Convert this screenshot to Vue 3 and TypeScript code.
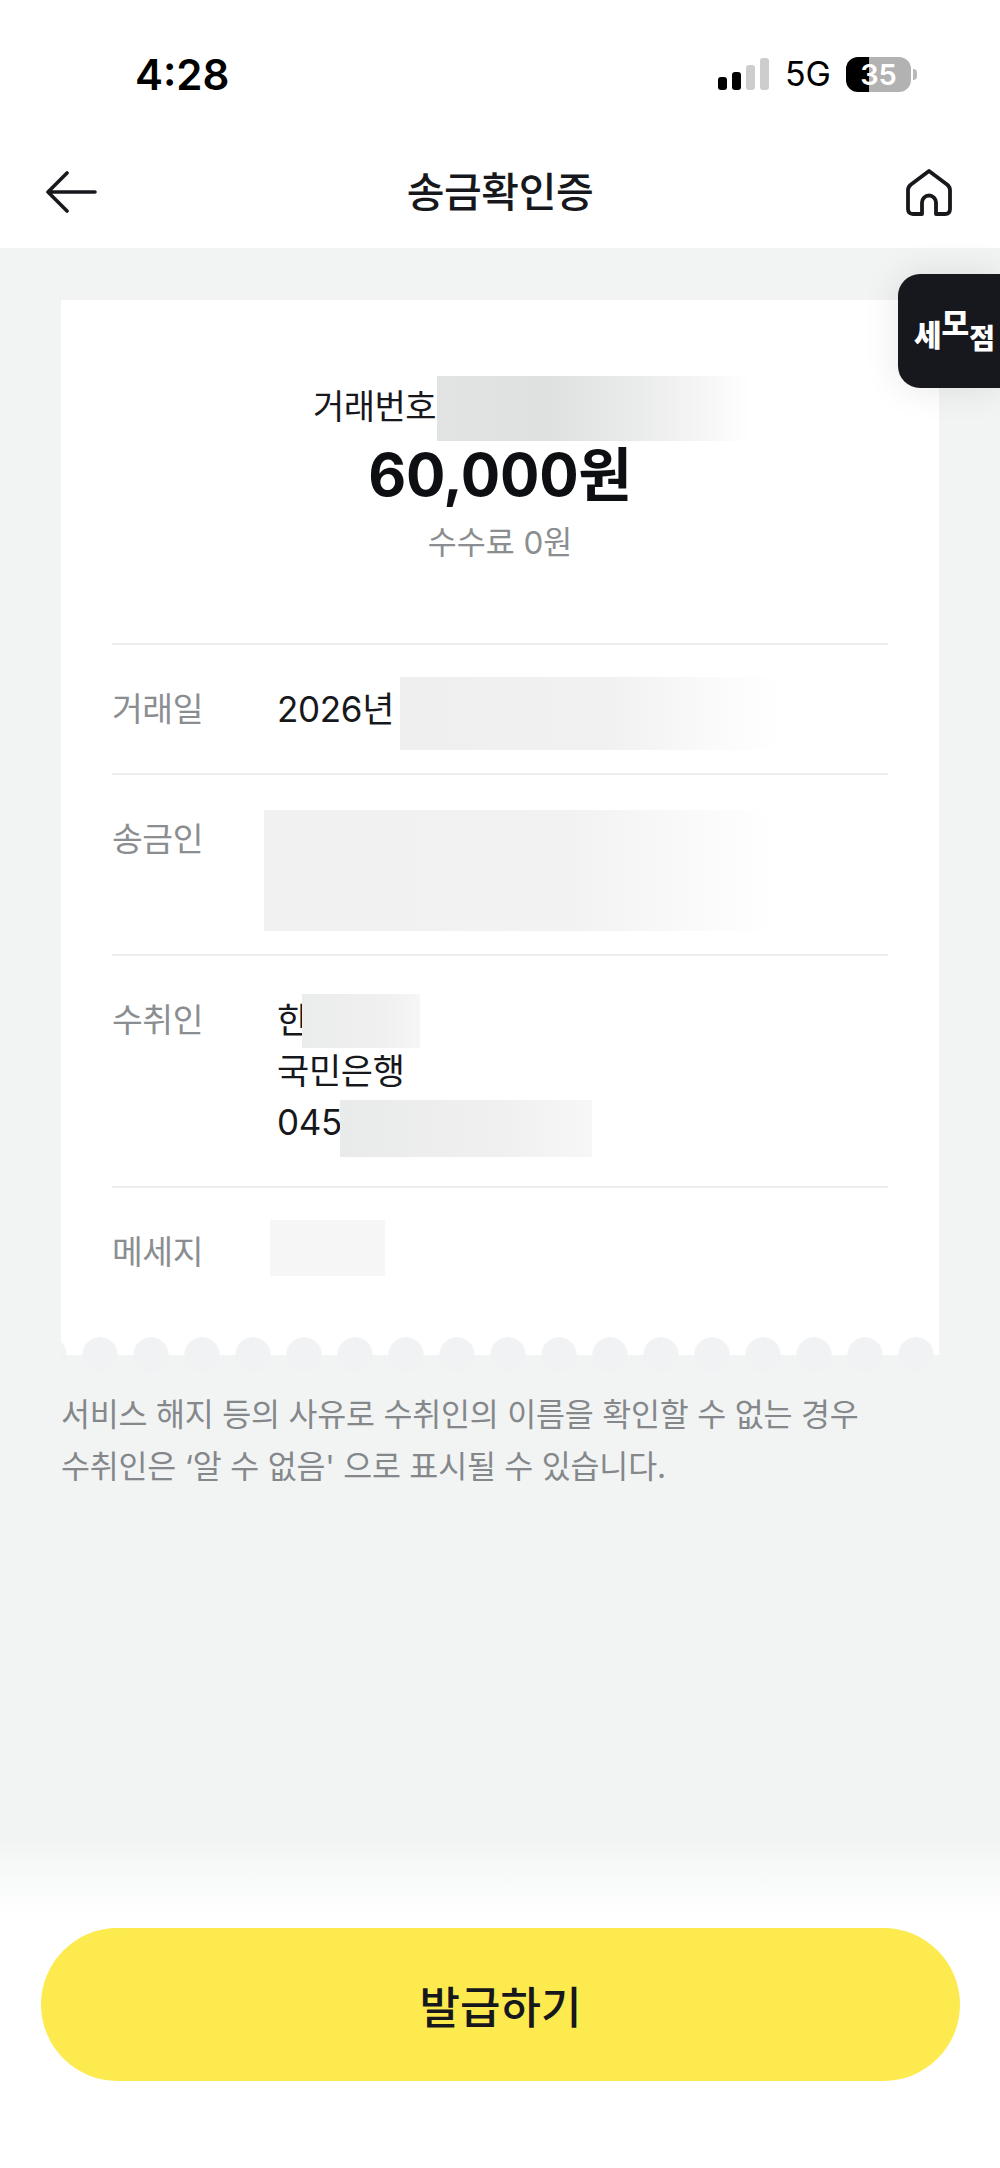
<template>
  <div class="page">
    <header class="top">
      <div class="status-bar">
        <span class="clock">4:28</span>
        <div class="status-right">
          <div class="signal">
            <i class="bar on b1"></i>
            <i class="bar on b2"></i>
            <i class="bar b3"></i>
            <i class="bar b4"></i>
          </div>
          <span class="network">5G</span>
          <div class="battery"><span>35</span></div>
          <i class="battery-nub"></i>
        </div>
      </div>
      <nav class="nav">
        <svg class="back" width="52" height="42" viewBox="0 0 52 42" fill="none">
          <path d="M50 21H3M22 2 3 21l19 19" stroke="#17181c" stroke-width="3.6" stroke-linecap="round" stroke-linejoin="round" />
        </svg>
        <h1 class="title">송금확인증</h1>
        <svg class="home" width="46" height="48" viewBox="0 0 46 48" fill="none">
          <path
            d="M23 3 41 16.500Q44 19 44 22V41Q44 46 39 46H30V34.500a7 7 0 0 0-14 0V46H7Q2 46 2 41V22Q2 19 5 16.500Z"
            stroke="#17181c"
            stroke-width="3.8"
            stroke-linejoin="round"
          />
        </svg>
      </nav>
    </header>

    <main class="content">
      <section class="receipt">
        <div class="summary">
          <div class="tx-number">
            <span>거래번호</span>
            <i class="mask mask-tx"></i>
          </div>
          <div class="amount">60,000원</div>
          <div class="fee">수수료 0원</div>
        </div>

        <div v-for="row in rows" :key="row.label" class="info-row">
          <div class="info-label">{{ row.label }}</div>
          <div class="info-value">
            <div v-for="(line, i) in row.lines" :key="i" class="info-line">
              {{ line.text }}
              <i v-if="line.mask" class="mask" :class="line.mask"></i>
            </div>
          </div>
        </div>

        <div class="scallops"></div>
      </section>

      <p class="notice">
        서비스 해지 등의 사유로 수취인의 이름을 확인할 수 없는 경우<br />
        수취인은 ‘알 수 없음' 으로 표시될 수 있습니다.
      </p>
    </main>

    <footer class="footer">
      <button class="issue-btn">발급하기</button>
    </footer>

    <div class="float-badge">
      <span class="se">세</span><span class="mo">모</span><span class="jeom">점</span>
    </div>
  </div>
</template>

<script setup lang="ts">
interface Line {
  text: string
  mask?: string
}

interface InfoRow {
  label: string
  lines: Line[]
}

const rows: InfoRow[] = [
  { label: '거래일', lines: [{ text: '2026년', mask: 'mask-date' }] },
  { label: '송금인', lines: [{ text: '', mask: 'mask-sender' }, { text: '' }] },
  {
    label: '수취인',
    lines: [
      { text: '한', mask: 'mask-name' },
      { text: '국민은행' },
      { text: '045', mask: 'mask-account' }
    ]
  },
  { label: '메세지', lines: [{ text: '', mask: 'mask-message' }] }
]
</script>

<style>
html,
body {
  background: #fff;
}
</style>

<style scoped>
.page {
  position: relative;
  width: 1000px;
  height: 2168px;
  display: flex;
  flex-direction: column;
  overflow: hidden;
  background: #fff;
  color: #17181c;
  font-family: Inter, "Noto Sans CJK KR", sans-serif;
}

.top {
  height: 248px;
  background: #fff;
}

.status-bar {
  height: 136px;
  padding: 12px 83px 0 135px;
  box-sizing: border-box;
  display: flex;
  align-items: center;
  justify-content: space-between;
}

.clock {
  font-size: 42px;
  font-weight: 600;
  color: #000;
}

.status-right {
  display: flex;
  align-items: center;
}

.signal {
  display: flex;
  align-items: flex-end;
  gap: 5.500px;
  height: 32px;
  margin-right: 16px;
}

.bar {
  width: 8.500px;
  border-radius: 3px;
  background: #cdcdcd;
}

.bar.on {
  background: #000;
}

.b1 { height: 13px; }
.b2 { height: 18px; }
.b3 { height: 25px; }
.b4 { height: 32px; }

.network {
  font-size: 34px;
  line-height: 36px;
  color: #000;
  margin-right: 15px;
}

.battery {
  width: 65px;
  height: 35px;
  border-radius: 12px;
  background: linear-gradient(90deg, #000 23px, #b2b2b2 23px);
  display: flex;
  align-items: center;
  justify-content: center;
  font-size: 29px;
  font-weight: 600;
  color: #fff;
}

.battery-nub {
  width: 4px;
  height: 11px;
  margin-left: 2px;
  border-radius: 0 4px 4px 0;
  background: #b9b9b9;
}

.nav {
  height: 112px;
  padding: 0 49px;
  display: grid;
  grid-template-columns: 1fr auto 1fr;
  align-items: center;
}

.back {
  margin-left: -4px;
}

.home {
  justify-self: end;
  margin-right: -1px;
}

.title {
  margin: 0;
  font-size: 41px;
  font-weight: 500;
  line-height: 48px;
  letter-spacing: -0.4px;
}

.content {
  flex: 1;
  padding: 52px 61px 0;
  background: #f2f4f4;
}

.receipt {
  position: relative;
  height: 1055px;
  padding: 0 51px;
  box-sizing: border-box;
  background: #fff;
}

.summary {
  height: 343px;
  padding-top: 85px;
  box-sizing: border-box;
  text-align: center;
}

.tx-number {
  position: relative;
  height: 44px;
  margin-left: 201px;
  text-align: left;
  font-size: 34px;
  line-height: 44px;
  letter-spacing: -0.5px;
}

.amount {
  margin-top: 11px;
  font-size: 58.500px;
  font-weight: 700;
  line-height: 70px;
  letter-spacing: -0.3px;
  color: #0d0f13;
}

.fee {
  margin-top: 13px;
  font-size: 31.500px;
  line-height: 40px;
  color: #8b8e91;
}

.info-row {
  display: flex;
  padding: 39px 0 38px;
  border-top: 2px solid #ebedef;
}

.info-label {
  width: 165px;
  flex: none;
  font-size: 33.500px;
  line-height: 51px;
  letter-spacing: -0.5px;
  color: #8b8e91;
}

.info-value {
  flex: 1;
  font-size: 35px;
  line-height: 51px;
  letter-spacing: -0.3px;
}

.info-line {
  position: relative;
  height: 51px;
}

/* 가려진 개인정보 영역 */
.mask {
  position: absolute;
  display: block;
}

.mask-tx {
  left: 124px;
  top: -9px;
  width: 313px;
  height: 65px;
  background: linear-gradient(90deg, #e2e3e3 0%, #dfe0e0 35%, #e9eaea 62%, #f6f6f6 85%, #fff 100%);
}

.mask-date {
  left: 123px;
  top: -7px;
  width: 380px;
  height: 73px;
  background: linear-gradient(90deg, #efefef 0%, #f1f1f1 55%, #fbfbfb 85%, #fff 100%);
}

.mask-sender {
  left: -13px;
  top: -4px;
  width: 510px;
  height: 121px;
  background: linear-gradient(90deg, #f1f1f1 0%, #f2f2f2 60%, #fafafa 85%, #fff 100%);
}

.mask-name {
  left: 25px;
  top: -1px;
  width: 118px;
  height: 54px;
  background: linear-gradient(90deg, #ebecec 0%, #f0f0f0 70%, #f6f6f6 100%);
}

.mask-account {
  left: 63px;
  top: 3px;
  width: 252px;
  height: 57px;
  background: linear-gradient(90deg, #e9eaea 0%, #f0f0f0 65%, #f7f7f7 100%);
}

.mask-message {
  left: -7px;
  top: -7px;
  width: 115px;
  height: 56px;
  background: #f6f6f6;
}

.scallops {
  position: absolute;
  left: 0;
  right: 0;
  bottom: -18px;
  height: 36px;
  background-image: radial-gradient(circle at center, #f1f2f4 17.500px, transparent 18px);
  background-size: 51px 36px;
  background-position: 13.500px 0;
}

.notice {
  margin: 34px 0 0;
  font-size: 31.500px;
  line-height: 52px;
  letter-spacing: -0.2px;
  color: #85888b;
}

.footer {
  padding: 90px 40px 87px 41px;
  background: linear-gradient(180deg, #f2f4f4 0, #ffffff 80px);
}

.issue-btn {
  display: block;
  width: 100%;
  height: 153px;
  border: none;
  border-radius: 77px;
  background: #fdea4f;
  color: #17181c;
  font-family: inherit;
  font-size: 44px;
  font-weight: 500;
}

.float-badge {
  position: absolute;
  top: 274px;
  right: 0;
  width: 102px;
  height: 114px;
  box-sizing: border-box;
  padding-left: 16px;
  border-radius: 22px 0 0 22px;
  background: #17181d;
  box-shadow: 0 0 36px rgba(0, 0, 0, 0.1);
  display: flex;
  align-items: flex-start;
  color: #fff;
  font-weight: 900;
  white-space: nowrap;
}

.se {
  font-size: 30px;
  line-height: 34px;
  margin-top: 44px;
}

.mo {
  font-size: 30px;
  line-height: 34px;
  margin-top: 32px;
}

.jeom {
  font-size: 28px;
  line-height: 30px;
  margin-top: 50px;
  letter-spacing: -1px;
}
</style>
